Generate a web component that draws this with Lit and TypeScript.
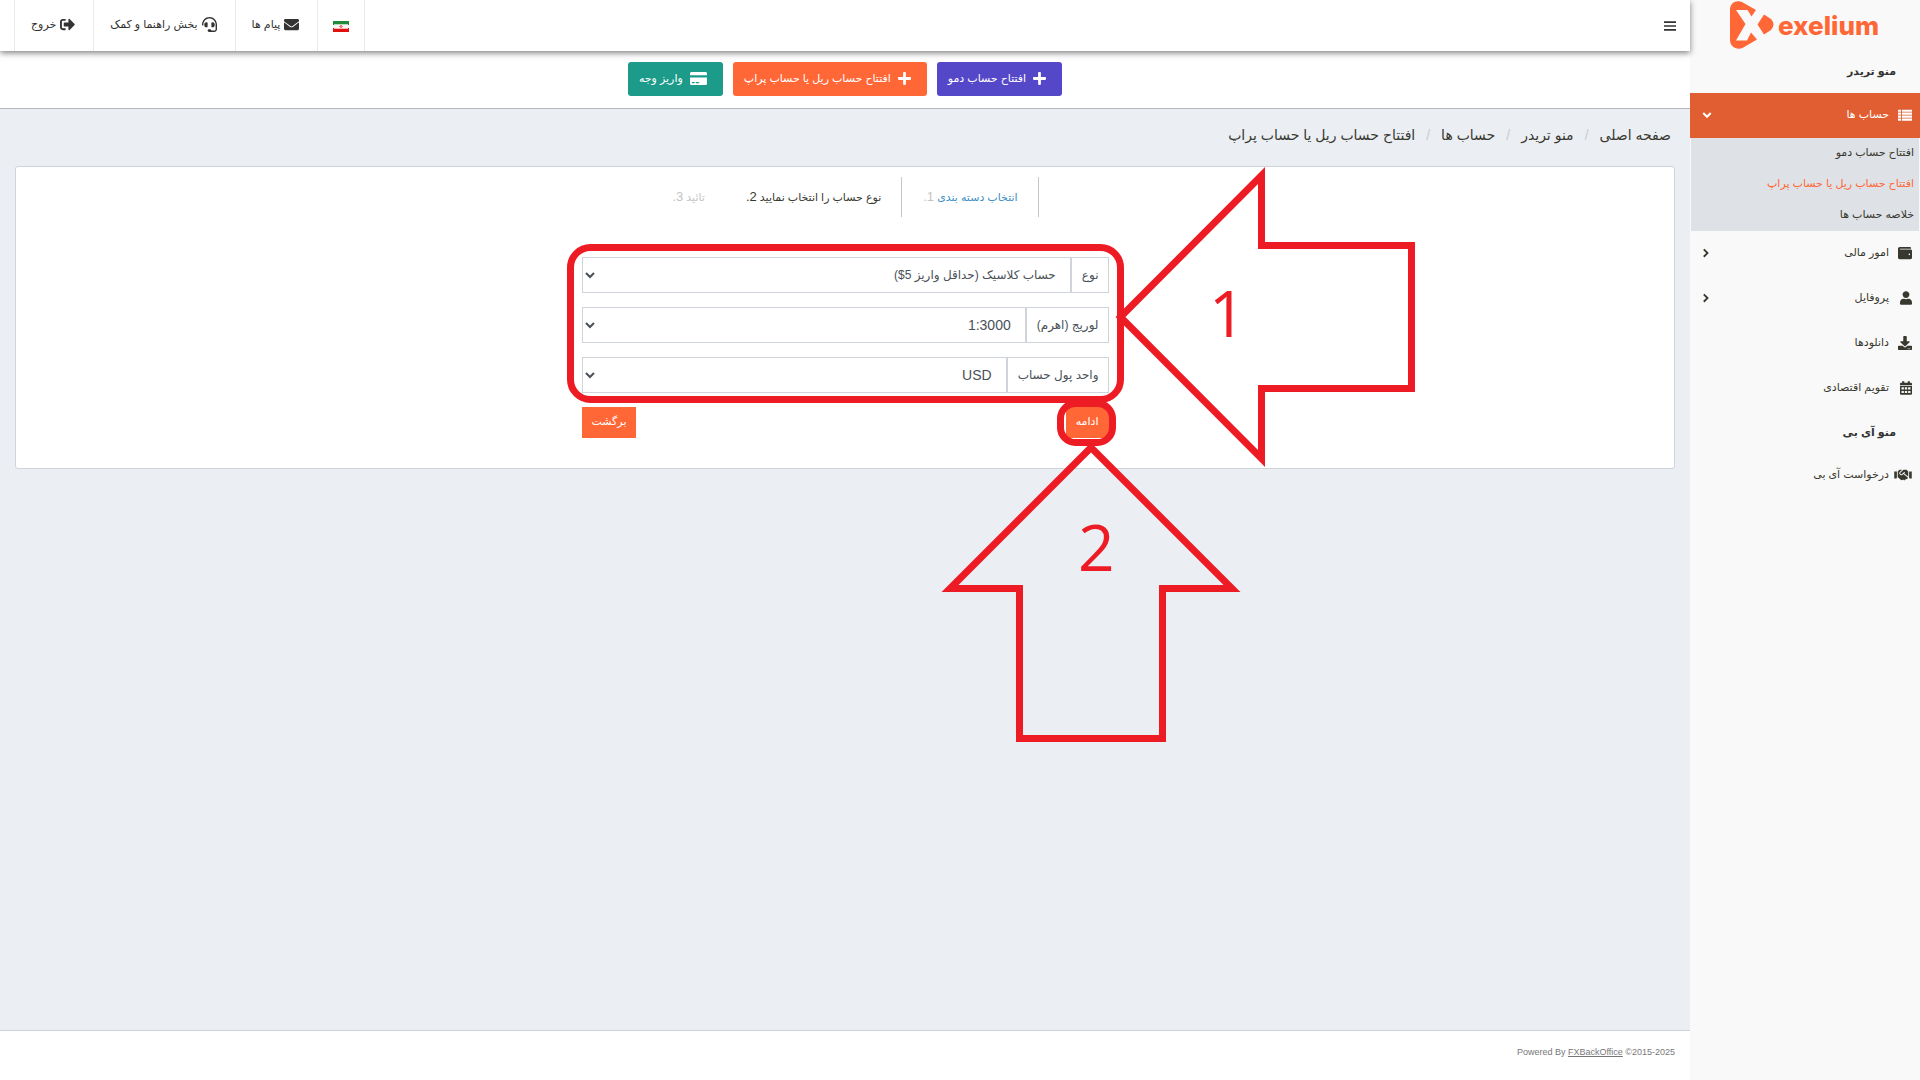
import { LitElement, html, css, svg } from "lit";
import { customElement, property, state } from "lit/decorators.js";
import { classMap } from "lit/directives/class-map.js";

type Icon = { w: number; d: string };

const ICONS: Record<string, Icon> = {
  bars: { w: 448, d: "M0 76h448v64H0zM0 224h448v64H0zM0 372h448v64H0z" },
  list: {
    w: 512,
    d: "M0 60h112v80H0zM144 60h368v80H144zM0 168h112v80H0zM144 168h368v80H144zM0 276h112v80H0zM144 276h368v80H144zM0 384h112v80H0zM144 384h368v80H144z",
  },
  plus: {
    w: 448,
    d: "M416 208H272V64c0-17.67-14.33-32-32-32h-32c-17.67 0-32 14.33-32 32v144H32c-17.67 0-32 14.33-32 32v32c0 17.67 14.33 32 32 32h144v144c0 17.67 14.33 32 32 32h32c17.67 0 32-14.33 32-32V304h144c17.67 0 32-14.33 32-32v-32c0-17.67-14.33-32-32-32z",
  },
  user: {
    w: 448,
    d: "M224 256c70.7 0 128-57.3 128-128S294.7 0 224 0 96 57.3 96 128s57.3 128 128 128zm89.6 32h-16.7c-22.2 10.2-46.9 16-72.9 16s-50.6-5.8-72.9-16h-16.7C60.2 288 0 348.2 0 422.4V464c0 26.5 21.5 48 48 48h352c26.5 0 48-21.5 48-48v-41.6c0-74.2-60.2-134.4-134.4-134.4z",
  },
  envelope: {
    w: 512,
    d: "M502.3 190.8c3.9-3.1 9.7-.2 9.7 4.7V400c0 26.5-21.5 48-48 48H48c-26.5 0-48-21.5-48-48V195.6c0-5 5.7-7.8 9.7-4.7 22.4 17.4 52.1 39.5 154.1 113.6 21.1 15.4 56.7 47.8 92.2 47.6 35.7.3 72-32.8 92.3-47.6 102-74.1 131.6-96.3 154-113.7zM256 320c23.2.4 56.6-29.2 73.4-41.4 132.7-96.3 142.8-104.7 173.4-128.7 5.8-4.5 9.2-11.5 9.2-18.9v-19c0-26.5-21.5-48-48-48H48c-26.5 0-48 21.5-48 48v19c0 7.4 3.4 14.3 9.2 18.9 30.6 23.9 40.7 32.4 173.4 128.7 16.8 12.2 50.2 41.8 73.4 41.4z",
  },
  download: {
    w: 512,
    d: "M216 0h80c13.3 0 24 10.7 24 24v168h87.7c17.8 0 26.7 21.5 14.1 34.1L269.7 378.3c-7.5 7.5-19.8 7.5-27.3 0L90.1 226.1c-12.6-12.6-3.7-34.1 14.1-34.1H192V24c0-13.3 10.7-24 24-24zm296 376v112c0 13.3-10.7 24-24 24H24c-13.3 0-24-10.7-24-24V376c0-13.3 10.7-24 24-24h146.7l49 49c20.1 20.1 52.5 20.1 72.6 0l49-49H488c13.3 0 24 10.7 24 24zm-124 88c0-11-9-20-20-20s-20 9-20 20 9 20 20 20 20-9 20-20zm64 0c0-11-9-20-20-20s-20 9-20 20 9 20 20 20 20-9 20-20z",
  },
  calendar: {
    w: 448,
    d: "M96 0h48c9 0 16 7 16 16v48h128V16c0-9 7-16 16-16h48c9 0 16 7 16 16v48h32c27 0 48 21 48 48v32H0v-32c0-27 21-48 48-48h32V16c0-9 7-16 16-16zM0 176h448v288c0 27-21 48-48 48H48c-27 0-48-21-48-48zM56 232v80h88v-80zM180 232v80h88v-80zM304 232v80h88v-80zM56 364v80h88v-80zM180 364v80h88v-80zM304 364v80h88v-80z",
  },
  wallet: {
    w: 512,
    d: "M461.2 128H80c-8.84 0-16-7.16-16-16s7.16-16 16-16h384c8.84 0 16-7.16 16-16 0-26.51-21.49-48-48-48H64C28.65 32 0 60.65 0 96v320c0 35.35 28.65 64 64 64h397.2c28.02 0 50.8-21.53 50.8-48V176c0-26.47-22.78-48-50.8-48zM416 336c-17.67 0-32-14.33-32-32s14.33-32 32-32 32 14.33 32 32-14.33 32-32 32z",
  },
  signOut: {
    w: 512,
    d: "M497 273L329 441c-15 15-41 4.5-41-17v-96H152c-13.3 0-24-10.7-24-24v-96c0-13.3 10.7-24 24-24h136V88c0-21.4 25.9-32 41-17l168 168c9.3 9.4 9.3 24.6 0 34zM192 436v-40c0-6.6-5.4-12-12-12H96c-17.7 0-32-14.3-32-32V160c0-17.7 14.3-32 32-32h84c6.6 0 12-5.4 12-12V76c0-6.6-5.4-12-12-12H96c-53 0-96 43-96 96v192c0 53 43 96 96 96h84c6.6 0 12-5.4 12-12z",
  },
  headset: {
    w: 512,
    d: "M192 208c0-17.67-14.33-32-32-32h-16c-35.35 0-64 28.65-64 64v48c0 35.35 28.65 64 64 64h16c17.67 0 32-14.33 32-32V208zm176 144c35.35 0 64-28.65 64-64v-48c0-35.35-28.65-64-64-64h-16c-17.67 0-32 14.33-32 32v112c0 17.67 14.33 32 32 32h16zM256 0C113.18 0 4.58 118.83 0 256v16c0 8.84 7.16 16 16 16h16c8.84 0 16-7.16 16-16v-16c0-114.69 93.31-208 208-208s208 93.31 208 208h-.12c.08 2.43.12 165.72.12 165.72 0 23.35-18.93 42.28-42.28 42.28H320c0-26.51-21.49-48-48-48h-32c-26.51 0-48 21.49-48 48s21.49 48 48 48h181.72c49.86 0 90.28-40.42 90.28-90.28V256C507.42 118.83 398.82 0 256 0z",
  },
  card: {
    w: 576,
    d: "M0 432c0 26.5 21.5 48 48 48h480c26.5 0 48-21.5 48-48V224H0v208zm192-48c0-6.6 5.4-12 12-12h96c6.6 0 12 5.4 12 12v20c0 6.6-5.4 12-12 12H204c-6.6 0-12-5.4-12-12v-20zm-128 0c0-6.6 5.4-12 12-12h72c6.6 0 12 5.4 12 12v20c0 6.6-5.4 12-12 12H76c-6.600 0-12-5.400-12-12v-20zM576 80v62H0V80c0-26.5 21.5-48 48-48h480c26.5 0 48 21.5 48 48z",
  },
  handshake: {
    w: 640,
    d: "M434.7 64h-85.9c-8 0-15.7 3-21.6 8.4l-98.3 90c-.1.1-.2.3-.3.4-16.6 15.6-16.3 40.5-2.1 56 12.7 13.9 39.4 17.6 56.1 2.7.1-.1.3-.1.4-.2l79.9-73.2c6.5-5.9 16.7-5.5 22.6 1 6 6.5 5.5 16.6-1 22.6l-26.1 23.9L504 313.8c2.9 2.4 5.5 5 7.9 7.7V128l-54.6-54.6c-5.9-6-14.1-9.4-22.6-9.4zM544 128.2v223.9c0 17.7 14.3 32 32 32h64V128.2h-96zM0 384h64c17.7 0 32-14.3 32-32V128.2H0V384zm483.9-45.3L334.6 217.5l-30 27.5c-29.7 27.1-75.2 24.5-101.7-4.4-26.9-29.4-24.8-74.9 4.4-101.7L289.1 64h-83.8c-8.5 0-16.6 3.4-22.6 9.4L128 128v223.9h18.3l90.5 81.9c27.4 22.3 67.7 18.1 90-9.3l.2-.2 17.9 15.5c15.9 13 39.4 10.5 52.3-5.4l31.4-38.6 5.4 4.4c13.7 11.1 33.9 9.1 45-4.7l9.5-11.7c11.2-13.8 9.1-33.9-4.6-45.1z",
  },
  chevronDown: {
    w: 512,
    d: "M256 416L28 188l72-72 156 156 156-156 72 72z",
  },
  chevronRight: {
    w: 384,
    d: "M336 256L112 480l-68-68 156-156L44 100l68-68z",
  },
};

const icon = (name: string, size = 14) => {
  const i = ICONS[name];
  return html`<svg
    class="icon"
    aria-hidden="true"
    viewBox="0 0 ${i.w} 512"
    width=${Math.round((size * i.w) / 512)}
    height=${size}
  >
    ${svg`<path fill="currentColor" fill-rule="evenodd" d=${i.d}></path>`}
  </svg>`;
};

const base = css`
  * {
    box-sizing: border-box;
  }
  a {
    color: inherit;
    text-decoration: none;
  }
  button {
    font: inherit;
    color: inherit;
    cursor: pointer;
  }
  .icon {
    display: block;
    flex: none;
  }
`;

@customElement("side-menu")
export class SideMenu extends LitElement {
  @state() private open = true;

  static styles = [
    base,
    css`
      :host {
        display: block;
        flex: none;
        width: 230px;
        background: #f9f9f9;
        color: #38382f;
        font-size: 11px;
      }
      .logo {
        display: flex;
        direction: ltr;
        align-items: center;
        gap: 4px;
        height: 50px;
        padding-left: 40px;
        color: #ff6737;
        font: 800 26px/30px Inter, sans-serif;
      }
      .name {
        padding-top: 2px;
      }
      .heading {
        margin: 0;
        padding: 0 24px;
        font-size: 11px;
        font-weight: 700;
        line-height: 42px;
        color: #333;
      }
      .heading:first-of-type {
        line-height: 43px;
      }
      .item {
        display: flex;
        align-items: center;
        gap: 8px;
        width: 100%;
        height: 45px;
        padding: 0 8px 2px 12px;
        border: 0;
        background: none;
        text-align: start;
      }
      .item.active {
        background: #e15d32;
        color: #fff;
      }
      .glyph {
        display: flex;
        justify-content: flex-start;
        width: 15px;
      }
      .label {
        flex: 1;
      }
      .sub {
        margin: 0 1px;
        padding: 0;
        list-style: none;
        background: #dee2e6;
      }
      .sub a {
        display: block;
        height: 31px;
        padding: 0 5px;
        line-height: 29px;
      }
      .sub .current {
        color: #ff6737;
      }
    `,
  ];

  render() {
    return html`
      <a class="logo" href="#" aria-label="exelium">
        <svg width="44" height="50" viewBox="0 0 44 50" aria-hidden="true">
          <path
            fill="currentColor"
            fill-rule="evenodd"
            d="M0 10C0 3 6 -.5 12 2L26 10L21.500 16.500L17.500 10H6L15.500 24L6 40.500H17L21 32.500L27 39.500L12.500 48C6 50.500 0 46 0 40ZM34 14.500L41 19Q46 24.500 41 30L34 34.500L27.500 24.500Z"
          ></path>
        </svg>
        <span class="name">exelium</span>
      </a>
      <h2 class="heading">منو تریدر</h2>
      <nav>
        <button class="item active" @click=${() => (this.open = !this.open)}>
          <span class="glyph">${icon("list")}</span>
          <span class="label">حساب ها</span>${icon("chevronDown", 10)}
        </button>
        ${this.open
          ? html`<ul class="sub">
              <li><a href="#">افتتاح حساب دمو</a></li>
              <li><a class="current" href="#">افتتاح حساب ریل یا حساب پراپ</a></li>
              <li><a href="#">خلاصه حساب ها</a></li>
            </ul>`
          : null}
        ${this.item("wallet", "امور مالی", true)}
        ${this.item("user", "پروفایل", true)}
        ${this.item("download", "دانلودها")}
        ${this.item("calendar", "تقویم اقتصادی")}
      </nav>
      <h2 class="heading">منو آی بی</h2>
      <nav>${this.item("handshake", "درخواست آی بی")}</nav>
    `;
  }

  private item(name: string, label: string, more = false) {
    return html`<a class="item" href="#">
      <span class="glyph">${icon(name)}</span>
      <span class="label">${label}</span>
      ${more ? icon("chevronRight", 10) : null}
    </a>`;
  }
}

@customElement("top-bar")
export class TopBar extends LitElement {
  static styles = [
    base,
    css`
      :host {
        display: flex;
        position: relative;
        justify-content: space-between;
        height: 51px;
        padding: 0 14px;
        background: #fff;
        box-shadow: 0 2px 6px rgba(0, 0, 0, 0.5);
        color: #333;
        font-size: 11px;
      }
      .toggle {
        display: flex;
        align-items: center;
        padding: 0;
        border: 0;
        background: none;
      }
      .links {
        display: flex;
        border-right: 1px solid #e9e9e9;
      }
      .link {
        display: flex;
        align-items: center;
        gap: 4px;
        padding: 0 18px 2px 16px;
        border-left: 1px solid #e9e9e9;
      }
      .flag {
        padding: 2px 15px 0;
      }
    `,
  ];

  render() {
    return html`
      <button class="toggle" aria-label="منو">${icon("bars")}</button>
      <nav class="links">
        <a class="link flag" href="#" aria-label="فارسی">
          <svg width="16" height="11" viewBox="0 0 16 11" aria-hidden="true">
            <path fill="#218a3a" d="M0 0h16v4H0z" />
            <path fill="#f6f6f6" d="M0 4h16v3H0z" />
            <path fill="#e01010" d="M0 7h16v4H0z" />
            <path fill="#b9dcbd" d="M1 3h14v1H1z" />
            <path fill="#f6b5b5" d="M1 7h14v1H1z" />
            <path fill="#f08088" d="M7 4h2v1h1v1H9v1H7V6H6V5h1z" />
          </svg>
        </a>
        <a class="link" href="#">${icon("envelope", 15)}<span>پیام ها</span></a>
        <a class="link" href="#">${icon("headset", 15)}<span>بخش راهنما و کمک</span></a>
        <a class="link" href="#">${icon("signOut", 15)}<span>خروج</span></a>
      </nav>
    `;
  }
}

@customElement("select-row")
export class SelectRow extends LitElement {
  @property() label = "";
  @property() value = "";
  @property({ type: Boolean }) latin = false;

  static styles = [
    base,
    css`
      :host {
        display: flex;
        height: 36px;
        color: #495057;
        font-size: 12px;
      }
      .label {
        display: flex;
        align-items: center;
        padding: 0 9px 0 10px;
        border: 1px solid #ced4da;
        white-space: nowrap;
      }
      .select {
        flex: 1;
        min-width: 0;
        padding: 0 10px 0 2px;
        border: 1px solid #ced4da;
        border-radius: 0;
        background: #fff;
        color: #495057;
        font-family: inherit;
        font-size: 12px;
      }
      .latin {
        font-size: 14px;
      }
    `,
  ];

  render() {
    return html`
      <label class="label" for="field">${this.label}</label>
      <select class=${classMap({ select: true, latin: this.latin })} id="field">
        <option>${this.value}</option>
      </select>
    `;
  }
}

@customElement("guide-marks")
export class GuideMarks extends LitElement {
  static styles = css`
    :host {
      position: absolute;
      top: -13px;
      left: -15px;
      pointer-events: none;
    }
    .marks {
      display: block;
      overflow: visible;
      fill: none;
      stroke: #ed1c24;
      stroke-width: 7;
      stroke-miterlimit: 4;
    }
    .number {
      fill: #ed1c24;
      stroke: none;
      font: 64px "Open Sans", sans-serif;
      direction: ltr;
    }
  `;

  render() {
    return html`<svg class="marks" width="850" height="500" viewBox="567 244 850 500">
      <rect x="570.500" y="247.500" width="550" height="152" rx="20"></rect>
      <rect x="1060.500" y="403.500" width="52" height="39" rx="15"></rect>
      <path d="M1120.500 317L1261.500 175.500V245.500H1411.500V388.500H1261.500V458.500Z"></path>
      <path d="M1091 447.500L1232 588.500H1162.500V738.500H1019.500V588.500H950Z"></path>
      <text class="number" x="1209" y="337">1</text>
      <text class="number" x="1078" y="571">2</text>
    </svg>`;
  }
}

@customElement("app-root")
export class AppRoot extends LitElement {
  static styles = [
    base,
    css`
      :host {
        display: flex;
        min-height: 100vh;
        direction: rtl;
        background: #ebeff4;
        color: #38382f;
        font-family: "Liberation Sans", "DejaVu Sans", sans-serif;
        font-size: 11px;
      }
      .main {
        display: flex;
        flex: 1;
        flex-direction: column;
        min-width: 0;
      }
      .actions {
        display: flex;
        justify-content: center;
        gap: 10px;
        padding: 11px 0 12px;
        border-bottom: 1px solid #b7babd;
        background: #fff;
      }
      .action {
        display: flex;
        align-items: center;
        gap: 7px;
        height: 34px;
        padding: 0 16px 2px 11px;
        border: 0;
        border-radius: 3px;
        color: #fff;
      }
      .demo {
        background: #5447c8;
      }
      .real {
        background: #ff6737;
      }
      .deposit {
        background: #1d9b8a;
      }
      .crumbs {
        display: flex;
        margin: 0;
        padding: 0 19px 4px;
        list-style: none;
        font-size: 14px;
        line-height: 53px;
      }
      .crumb + .crumb::before {
        content: "/";
        padding: 0 11px;
        color: #c8ccd0;
      }
      .card {
        margin: 0 15px;
        padding: 10px 10px 30px;
        border: 1px solid #ced4da;
        border-radius: 3px;
        background: #fff;
      }
      .steps {
        display: flex;
        justify-content: center;
        margin: 0 0 40px;
        padding: 0;
        list-style: none;
        line-height: 40px;
        color: #c4c4c4;
      }
      .step {
        height: 40px;
        padding: 0 20px 0 21px;
      }
      .ruled {
        border-right: 1px solid #c4c8cc;
      }
      .step a {
        color: #3f8fc5;
      }
      .number {
        font-size: 13px;
      }
      .now {
        color: #38382f;
      }
      .form {
        display: flex;
        position: relative;
        flex-direction: column;
        gap: 14px;
        width: 527px;
        max-width: 100%;
        margin: 0 auto;
      }
      .buttons {
        display: flex;
        justify-content: space-between;
      }
      .submit {
        height: 31px;
        padding: 0 10px 2px;
        border: 0;
        background: #ff6737;
        color: #fff;
      }
      .footer {
        margin-top: auto;
        padding: 0 15px 7px;
        border-top: 1px solid #ced4da;
        background: #fff;
        color: #777;
        font-size: 9px;
        line-height: 42px;
      }
      .credit {
        direction: ltr;
        unicode-bidi: isolate;
      }
      .credit a {
        text-decoration: underline;
      }
    `,
  ];

  render() {
    const crumbs = ["صفحه اصلی", "منو تریدر", "حساب ها", "افتتاح حساب ریل یا حساب پراپ"];
    const actions = [
      { kind: "demo", icon: "plus", text: "افتتاح حساب دمو" },
      { kind: "real", icon: "plus", text: "افتتاح حساب ریل یا حساب پراپ" },
      { kind: "deposit", icon: "card", text: "واریز وجه" },
    ];
    return html`
      <side-menu></side-menu>
      <div class="main">
        <top-bar></top-bar>
        <div class="actions">
          ${actions.map(
            (a) => html`<button class=${classMap({ action: true, [a.kind]: true })}>
              ${icon(a.icon, 15)}<span>${a.text}</span>
            </button>`,
          )}
        </div>
        <ol class="crumbs">
          ${crumbs.map((c) => html`<li class="crumb"><a href="#">${c}</a></li>`)}
        </ol>
        <section class="card">
          <ol class="steps">
            <li class="step ruled"><a href="#">انتخاب دسته بندی</a> <span class="number">1.</span></li>
            <li class="step ruled now">نوع حساب را انتخاب نمایید <span class="number">2.</span></li>
            <li class="step">تائید <span class="number">3.</span></li>
          </ol>
          <form class="form" @submit=${(e: Event) => e.preventDefault()}>
            <select-row label="نوع" value="حساب کلاسیک (حداقل واریز 5$)"></select-row>
            <select-row label="لوریج (اهرم)" value="1:3000" latin></select-row>
            <select-row label="واحد پول حساب" value="USD" latin></select-row>
            <div class="buttons">
              <button class="submit" type="submit">ادامه</button>
              <button class="submit" type="button">برگشت</button>
            </div>
            <guide-marks></guide-marks>
          </form>
        </section>
        <footer class="footer">
          <span class="credit">Powered By <a href="#">FXBackOffice</a> ©2015-2025</span>
        </footer>
      </div>
    `;
  }
}
